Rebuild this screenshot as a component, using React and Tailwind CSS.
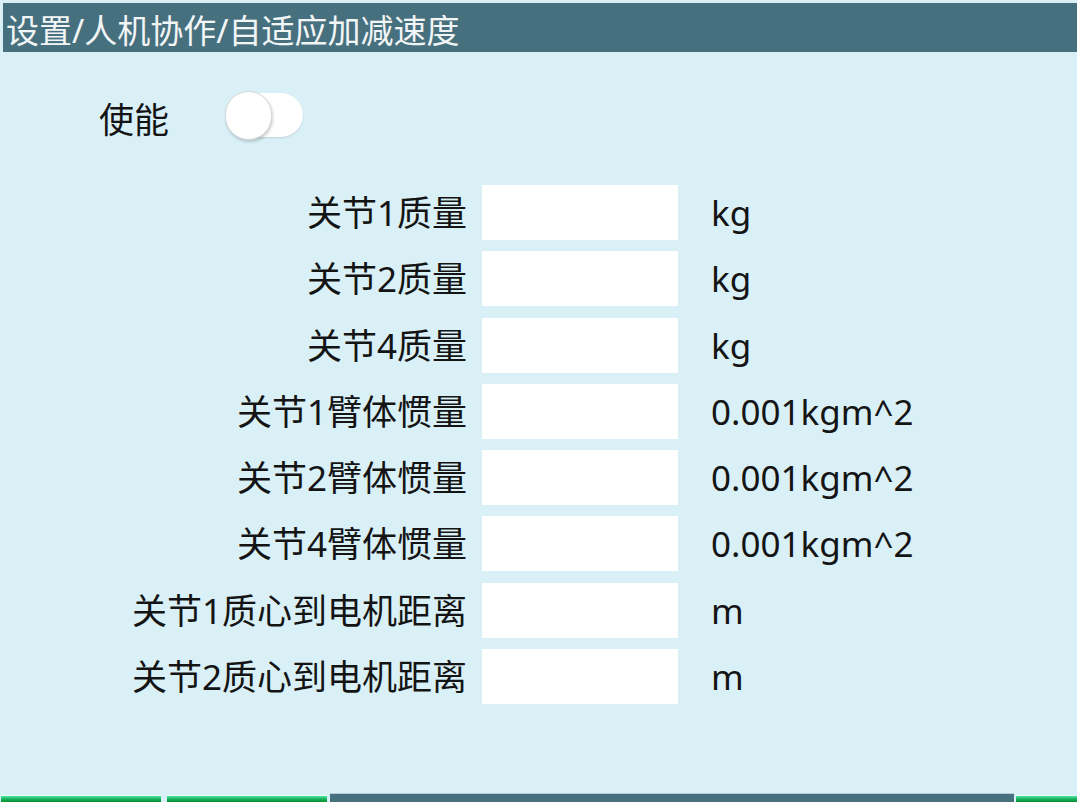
const rows = [
  { label: "关节1质量", unit: "kg" },
  { label: "关节2质量", unit: "kg" },
  { label: "关节4质量", unit: "kg" },
  { label: "关节1臂体惯量", unit: "0.001kgm^2" },
  { label: "关节2臂体惯量", unit: "0.001kgm^2" },
  { label: "关节4臂体惯量", unit: "0.001kgm^2" },
  { label: "关节1质心到电机距离", unit: "m" },
  { label: "关节2质心到电机距离", unit: "m" },
];

const font = { fontFamily: '"Noto Sans", "Noto Sans CJK SC", sans-serif' };

function Toggle() {
  return (
    <div className="relative w-[78px] h-[49px]">
      <div className="absolute left-[2px] top-[2px] w-[76px] h-[44px] rounded-full bg-white shadow-[0_1px_2px_rgba(0,0,0,0.12)]" />
      <div className="absolute left-0 top-0 w-[47px] h-[49px] rounded-full bg-white border border-[#d4d8da] shadow-[1px_2px_3px_rgba(0,0,0,0.18)]" />
    </div>
  );
}

export default function App() {
  return (
    <div className="w-[1077px] h-[802px] bg-[#d9f0f7] flex flex-col overflow-hidden text-[#141414]" style={font}>
      {/* title bar */}
      <div className="mt-[3px] ml-[3px] h-[49px] bg-[#47707f] flex items-end pl-[3px]">
        <span className="text-[33px] leading-[42px] text-[#f2f5f6]">设置/人机协作/自适应加减速度</span>
      </div>

      {/* enable switch */}
      <div className="flex items-center h-[50px] mt-[38px]">
        <span className="ml-[99px] w-[126px] text-[35px] leading-none pt-[8px]">使能</span>
        <Toggle />
      </div>

      {/* parameter rows */}
      <div className="mt-[45px] flex flex-col gap-[11.3px]">
        {rows.map((r) => (
          <div key={r.label} className="flex items-center h-[55px]">
            <span className="w-[467px] text-right text-[35px] leading-none">{r.label}</span>
            <div className="ml-[15px] w-[196px] h-[55px] bg-white" />
            <span className="ml-[33px] text-[35px] leading-none">{r.unit}</span>
          </div>
        ))}
      </div>

      {/* bottom softkeys */}
      <div className="mt-auto flex items-end h-[9px]">
        <div className="w-[160px] h-[7px] ml-[1px] bg-gradient-to-b from-[#52e3a8] via-[#13b45e] to-[#0b8a2c] border-t border-[#e8fff4]" />
        <div className="w-[160px] h-[7px] ml-[6px] bg-gradient-to-b from-[#52e3a8] via-[#13b45e] to-[#0b8a2c] border-t border-[#e8fff4]" />
        <div className="w-[684px] h-[9px] ml-[3px] bg-[#47707f] border-t border-[#b9cdd4]" />
        <div className="flex-1 h-[7px] ml-[2px] bg-gradient-to-b from-[#52e3a8] via-[#13b45e] to-[#0b8a2c] border-t border-[#e8fff4]" />
      </div>
    </div>
  );
}
